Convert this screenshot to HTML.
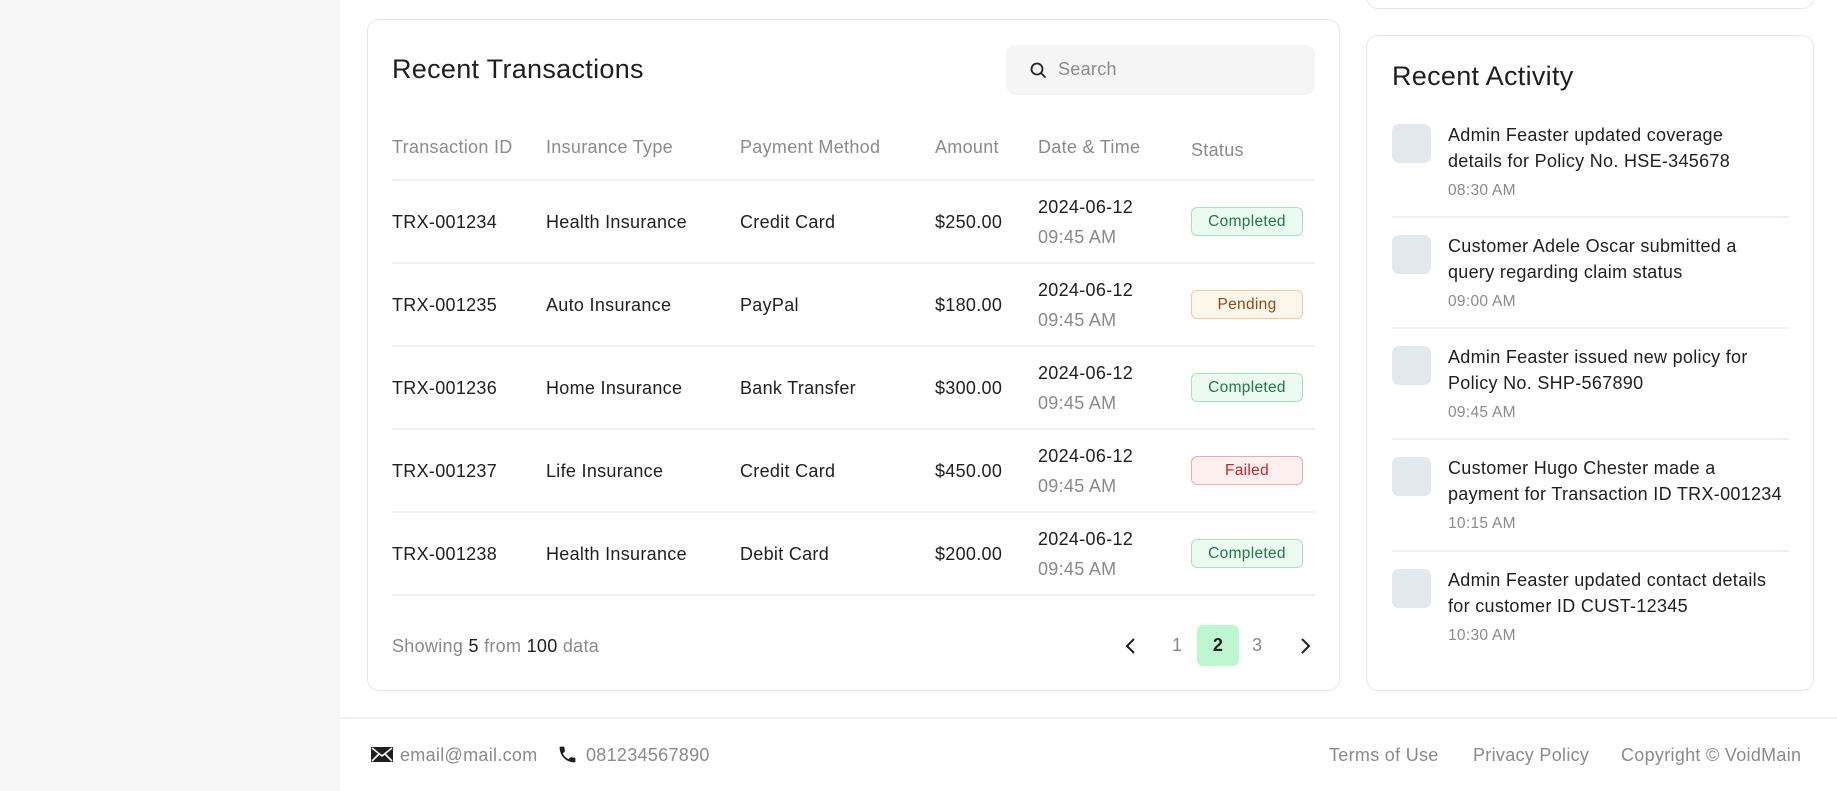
<!DOCTYPE html>
<html><head><meta charset="utf-8"><style>
*{box-sizing:border-box;margin:0;padding:0}
body{width:1837px;height:791px;overflow:hidden;background:#fff;font-family:"Liberation Sans",sans-serif;color:#1f1f1f;position:relative;letter-spacing:0.3px}
.side{position:absolute;left:0;top:0;width:340px;height:791px;background:#f7f7f7}
.card{position:absolute;border:1.5px solid #e3e7ee;border-radius:12px;background:#fff}
.abs{position:absolute;white-space:nowrap}
.hd{color:#8a8a8a;font-size:18px}
.cell{font-size:18px}
.line{position:absolute;height:2px;background:#edf0f4}
.badge{position:absolute;width:112px;height:29px;border-radius:6px;font-size:15.5px;text-align:center;line-height:27px;border:1.5px solid}
.ok{background:#ecfbf1;border-color:#a8e2bd;color:#1f7a43}
.pe{background:#fff6ec;border-color:#f3c89c;color:#8a4b12}
.fa{background:#fff0f0;border-color:#f3a7a7;color:#c62828}
.gray{color:#8a8a8a}
.ic{position:absolute;width:39px;height:39px;border-radius:7px;background:#e3e7ee}
.at{position:absolute;font-size:18px;line-height:26px;left:1448px;white-space:nowrap}
.tm{position:absolute;font-size:15.5px;color:#8a8a8a;left:1448px}
</style></head><body>
<div class="side"></div>
<div class="card" style="left:1366px;top:-20px;width:448px;height:29px"></div>
<div class="card" style="left:367px;top:19px;width:973px;height:672px"></div>
<div class="abs" style="left:392px;top:54px;font-size:27px">Recent Transactions</div>
<div class="abs" style="left:1006px;top:45px;width:309px;height:50px;background:#f5f5f5;border-radius:10px"></div>
<svg class="abs" style="left:1029px;top:61px" width="18" height="18" viewBox="0 0 18 18"><circle cx="8" cy="8" r="5.5" fill="none" stroke="#222" stroke-width="1.8"/><path d="M12 12l4 4" stroke="#222" stroke-width="1.8" stroke-linecap="round"/></svg>
<div class="abs gray" style="left:1058px;top:59px;font-size:18px">Search</div>

<div class="abs hd" style="left:392px;top:137px">Transaction ID</div>
<div class="abs hd" style="left:546px;top:137px">Insurance Type</div>
<div class="abs hd" style="left:740px;top:137px">Payment Method</div>
<div class="abs hd" style="left:935px;top:137px">Amount</div>
<div class="abs hd" style="left:1038px;top:137px">Date &amp; Time</div>
<div class="abs hd" style="left:1191px;top:140px">Status</div>
<div class="line" style="left:392px;top:179px;width:923px"></div>

<div class="abs cell" style="left:392px;top:212px">TRX-001234</div><div class="abs cell" style="left:546px;top:212px">Health Insurance</div><div class="abs cell" style="left:740px;top:212px">Credit Card</div><div class="abs cell" style="left:935px;top:212px">$250.00</div><div class="abs cell" style="left:1038px;top:197px">2024-06-12</div><div class="abs cell gray" style="left:1038px;top:227px">09:45 AM</div><div class="badge ok" style="left:1191px;top:207px">Completed</div>
<div class="line" style="left:392px;top:262px;width:923px"></div>
<div class="abs cell" style="left:392px;top:295px">TRX-001235</div><div class="abs cell" style="left:546px;top:295px">Auto Insurance</div><div class="abs cell" style="left:740px;top:295px">PayPal</div><div class="abs cell" style="left:935px;top:295px">$180.00</div><div class="abs cell" style="left:1038px;top:280px">2024-06-12</div><div class="abs cell gray" style="left:1038px;top:310px">09:45 AM</div><div class="badge pe" style="left:1191px;top:290px">Pending</div>
<div class="line" style="left:392px;top:345px;width:923px"></div>
<div class="abs cell" style="left:392px;top:378px">TRX-001236</div><div class="abs cell" style="left:546px;top:378px">Home Insurance</div><div class="abs cell" style="left:740px;top:378px">Bank Transfer</div><div class="abs cell" style="left:935px;top:378px">$300.00</div><div class="abs cell" style="left:1038px;top:363px">2024-06-12</div><div class="abs cell gray" style="left:1038px;top:393px">09:45 AM</div><div class="badge ok" style="left:1191px;top:373px">Completed</div>
<div class="line" style="left:392px;top:428px;width:923px"></div>
<div class="abs cell" style="left:392px;top:461px">TRX-001237</div><div class="abs cell" style="left:546px;top:461px">Life Insurance</div><div class="abs cell" style="left:740px;top:461px">Credit Card</div><div class="abs cell" style="left:935px;top:461px">$450.00</div><div class="abs cell" style="left:1038px;top:446px">2024-06-12</div><div class="abs cell gray" style="left:1038px;top:476px">09:45 AM</div><div class="badge fa" style="left:1191px;top:456px">Failed</div>
<div class="line" style="left:392px;top:511px;width:923px"></div>
<div class="abs cell" style="left:392px;top:544px">TRX-001238</div><div class="abs cell" style="left:546px;top:544px">Health Insurance</div><div class="abs cell" style="left:740px;top:544px">Debit Card</div><div class="abs cell" style="left:935px;top:544px">$200.00</div><div class="abs cell" style="left:1038px;top:529px">2024-06-12</div><div class="abs cell gray" style="left:1038px;top:559px">09:45 AM</div><div class="badge ok" style="left:1191px;top:539px">Completed</div>
<div class="line" style="left:392px;top:594px;width:923px"></div>

<div class="abs gray" style="left:392px;top:636px;font-size:18px">Showing <span style="color:#1f1f1f">5</span> from <span style="color:#1f1f1f">100</span> data</div>
<svg class="abs" style="left:1124px;top:636px" width="14" height="20" viewBox="0 0 14 20"><path d="M10 3L3 10l7 7" fill="none" stroke="#222" stroke-width="2"/></svg>
<div class="abs gray" style="left:1172px;top:635px;font-size:18px">1</div>
<div class="abs" style="left:1197px;top:625px;width:42px;height:41px;background:#bdf7cf;border-radius:6px;text-align:center;line-height:41px;font-size:18px;font-weight:bold">2</div>
<div class="abs gray" style="left:1252px;top:635px;font-size:18px">3</div>
<svg class="abs" style="left:1298px;top:636px" width="14" height="20" viewBox="0 0 14 20"><path d="M4 3l7 7-7 7" fill="none" stroke="#222" stroke-width="2"/></svg>

<div class="card" style="left:1366px;top:35px;width:448px;height:656px"></div>
<div class="abs" style="left:1392px;top:61px;font-size:27px">Recent Activity</div>

<div class="ic" style="left:1392px;top:124px"></div>
<div class="at" style="top:122px">Admin Feaster updated coverage<br>details for Policy No. HSE-345678</div>
<div class="tm" style="top:182px">08:30 AM</div>
<div class="line" style="left:1392px;top:216px;width:397px"></div>
<div class="ic" style="left:1392px;top:235px"></div>
<div class="at" style="top:233px">Customer Adele Oscar submitted a<br>query regarding claim status</div>
<div class="tm" style="top:293px">09:00 AM</div>
<div class="line" style="left:1392px;top:327px;width:397px"></div>
<div class="ic" style="left:1392px;top:346px"></div>
<div class="at" style="top:344px">Admin Feaster issued new policy for<br>Policy No. SHP-567890</div>
<div class="tm" style="top:404px">09:45 AM</div>
<div class="line" style="left:1392px;top:438px;width:397px"></div>
<div class="ic" style="left:1392px;top:457px"></div>
<div class="at" style="top:455px">Customer Hugo Chester made a<br>payment for Transaction ID TRX-001234</div>
<div class="tm" style="top:515px">10:15 AM</div>
<div class="line" style="left:1392px;top:550px;width:397px"></div>
<div class="ic" style="left:1392px;top:569px"></div>
<div class="at" style="top:567px">Admin Feaster updated contact details<br>for customer ID CUST-12345</div>
<div class="tm" style="top:627px">10:30 AM</div>

<div class="line" style="left:340px;top:717px;width:1497px"></div>
<svg class="abs" style="left:371px;top:747px" width="22" height="15" viewBox="0 0 22 15"><rect x="0" y="0" width="22" height="15" fill="#1f1f1f"/><path d="M1 1l10 8 10-8M1 14l7-7M21 14l-7-7" fill="none" stroke="#fff" stroke-width="1.6"/></svg>
<div class="abs gray" style="left:400px;top:745px;font-size:18px">email@mail.com</div>
<svg class="abs" style="left:557px;top:744px" width="21" height="21" viewBox="0 0 24 24"><path fill="#1f1f1f" d="M6.6 10.8c1.4 2.8 3.8 5.1 6.6 6.6l2.2-2.2c.3-.3.7-.4 1-.2 1.1.4 2.3.6 3.6.6.6 0 1 .4 1 1V20c0 .6-.4 1-1 1C10.6 21 3 13.4 3 4c0-.6.4-1 1-1h3.5c.6 0 1 .4 1 1 0 1.3.2 2.5.6 3.6.1.3 0 .7-.2 1L6.6 10.8z"/></svg>
<div class="abs gray" style="left:586px;top:745px;font-size:18px">081234567890</div>
<div class="abs gray" style="left:1329px;top:745px;font-size:18px">Terms of Use</div>
<div class="abs gray" style="left:1473px;top:745px;font-size:18px">Privacy Policy</div>
<div class="abs gray" style="left:1621px;top:745px;font-size:18px">Copyright © VoidMain</div>
</body></html>
